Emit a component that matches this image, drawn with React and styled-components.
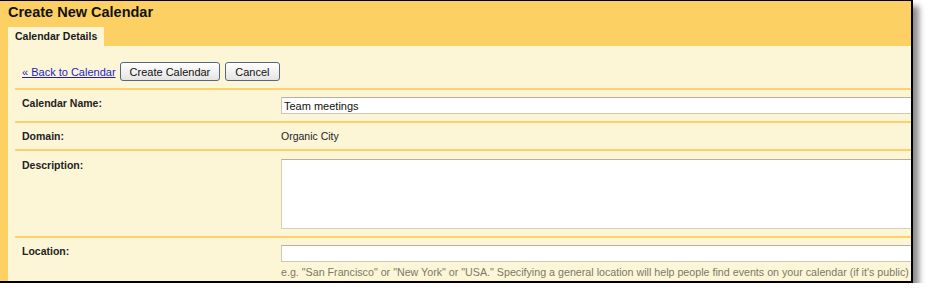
import React from "react";
import styled, { createGlobalStyle } from "styled-components";

const GlobalStyle = createGlobalStyle`
	body {
		margin: 0;
		background: #ffffff;
		font-family: "Liberation Sans", Arial, sans-serif;
	}
`;

const Window = styled.div`
	box-sizing: border-box;
	width: 913px;
	height: 283px;
	border-top: 1px solid #000;
	border-right: 2px solid #000;
	border-bottom: 2px solid #000;
	background: #fdd063;
	padding-left: 8px;
	display: flex;
	flex-direction: column;
	overflow: hidden;
	box-shadow: 6px 6px 6px rgba(0, 0, 0, 0.45);
	& > * {
		flex-shrink: 0;
	}
`;

const Title = styled.h1`
	margin: 0;
	height: 26px;
	box-sizing: border-box;
	padding-top: 3px;
	font-size: 14.5px;
	line-height: 17px;
	font-weight: bold;
	color: #111;
`;

const TabStrip = styled.div`
	display: flex;
`;

const Tab = styled.div`
	height: 19px;
	line-height: 19px;
	padding: 0 7px;
	min-width: 82px;
	white-space: nowrap;
	background: #fdf6d6;
	font-size: 10.5px;
	font-weight: bold;
	color: #1a1a1a;
`;

const Panel = styled.div`
	flex: 1 0 auto;
	background: #fdf6d6;
	padding-left: 7px;
`;

const Toolbar = styled.div`
	display: flex;
	align-items: center;
	padding: 16px 0 7px 7px;
`;

const BackLink = styled.a`
	font-size: 11px;
	color: #1c1ccc;
	text-decoration: underline;
	margin-right: 4px;
	cursor: pointer;
`;

const Button = styled.button`
	height: 19px;
	padding: 0 9px;
	margin-right: 5px;
	border: 1px solid #56667f;
	border-radius: 3px;
	background: linear-gradient(#ffffff, #e4e4e4);
	font-family: "Liberation Sans", Arial, sans-serif;
	font-size: 11px;
	color: #111;
`;

const Row = styled.div`
	display: grid;
	grid-template-columns: 259px 1fr;
	border-top: 2px solid #fcd06a;
	padding: ${(p) => p.$top || 7}px 0 7px 7px;
`;

const Label = styled.div`
	font-size: 10.5px;
	line-height: 12px;
	font-weight: bold;
	color: #222;
`;

const Value = styled.div`
	font-size: 10.5px;
	line-height: 12px;
	color: #222;
	white-space: nowrap;
`;

const Input = styled.input`
	display: block;
	box-sizing: border-box;
	width: 700px;
	height: 17px;
	margin: 0;
	padding: 0 2px;
	border: 1px solid #cdc9b2;
	border-top-color: #b5b19c;
	background: #fff;
	font-family: "Liberation Sans", Arial, sans-serif;
	font-size: 11px;
	color: #111;
	outline: none;
`;

const TextArea = styled.textarea`
	display: block;
	box-sizing: border-box;
	width: 700px;
	height: 70px;
	margin: 0;
	border: 1px solid #d3cfb8;
	border-top-color: #b5b19c;
	background: #fff;
	resize: none;
	outline: none;
`;

const Hint = styled.div`
	margin-top: 4px;
	font-size: 10.7px;
	line-height: 12px;
	color: #7a786c;
	white-space: nowrap;
`;

const App = () => {
	return (
		<>
			<GlobalStyle />
			<Window>
				<Title>Create New Calendar</Title>
				<TabStrip>
					<Tab>Calendar Details</Tab>
				</TabStrip>
				<Panel>
					<Toolbar>
						<BackLink>« Back to Calendar</BackLink>
						<Button>Create Calendar</Button>
						<Button>Cancel</Button>
					</Toolbar>
					<Row>
						<Label>Calendar Name:</Label>
						<div>
							<Input defaultValue="Team meetings" />
						</div>
					</Row>
					<Row>
						<Label>Domain:</Label>
						<Value>Organic City</Value>
					</Row>
					<Row $top={8}>
						<Label>Description:</Label>
						<div>
							<TextArea />
						</div>
					</Row>
					<Row>
						<Label>Location:</Label>
						<Value>
							<Input />
							<Hint>
								e.g. "San Francisco" or "New York" or "USA." Specifying a general location will help people find events on your calendar (if it's public)
							</Hint>
						</Value>
					</Row>
				</Panel>
			</Window>
		</>
	);
};

export default App;
